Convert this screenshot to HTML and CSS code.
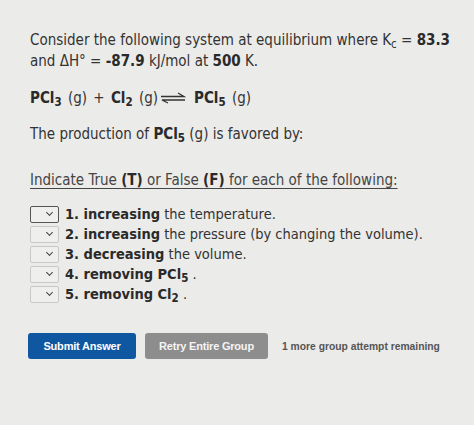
FILE: index.html
```html
<!DOCTYPE html>
<html>
<head>
<meta charset="utf-8">
<link rel="stylesheet" href="styles.css">
</head>
<body>
<div class="page">
  <p class="intro">Consider the following system at equilibrium where K<sub>c</sub> = <b>83.3</b> and ΔH° = <b>-87.9</b> kJ/mol at <b>500</b> K.</p>
  <p class="eq"><b>PCl<sub>3</sub></b> (g) + <b>Cl<sub>2</sub></b> (g)<span class="arrow"><svg width="26" height="12" viewBox="0 0 26 12"><path d="M1 4.5 H24 L18 1" fill="none" stroke="#333" stroke-width="1.3"/><path d="M25 8 H2 L8 11" fill="none" stroke="#333" stroke-width="1.3"/></svg></span><b>PCl<sub>5</sub></b> (g)</p>
  <p class="q">The production of <b>PCl<sub>5</sub></b> (g) is favored by:</p>
  <p class="ind"><u>Indicate True <b>(T)</b> or False <b>(F)</b> for each of the following:</u></p>
  <ul class="items">
    <li><span class="sel focus"><span class="chev"></span></span><span><b>1. increasing</b> the temperature.</span></li>
    <li><span class="sel"><span class="chev"></span></span><span><b>2. increasing</b> the pressure (by changing the volume).</span></li>
    <li><span class="sel"><span class="chev"></span></span><span><b>3. decreasing</b> the volume.</span></li>
    <li><span class="sel"><span class="chev"></span></span><span><b>4. removing PCl<sub>5</sub></b> .</span></li>
    <li><span class="sel"><span class="chev"></span></span><span><b>5. removing Cl<sub>2</sub></b> .</span></li>
  </ul>
  <div class="actions">
    <button class="btn submit">Submit Answer</button>
    <button class="btn retry">Retry Entire Group</button>
    <span class="remain">1 more group attempt remaining</span>
  </div>
</div>
</body>
</html>
```
FILE: styles.css
```css
html, body { margin: 0; padding: 0; }
body {
  background: #ebebe9;
  width: 474px;
  height: 425px;
  overflow: hidden;
  font-family: "DejaVu Sans Condensed", "DejaVu Sans", Verdana, sans-serif;
  font-stretch: condensed;
  color: #333;
}
.page { padding: 30px 0 0 30px; }
p { margin: 0; font-size: 15px; line-height: 21px; }
.intro { width: 430px; }
sub { font-size: 11.5px; vertical-align: -3px; line-height: 0; }
b { font-weight: bold; color: #2a2a2a; }
.eq { margin-top: 16px; word-spacing: 2px; }
.arrow { display: inline-block; vertical-align: middle; margin: 0 8px 0 2px; position: relative; top: -1px; }
.arrow svg { display: block; }
.q { margin-top: 15px; }
.ind { margin-top: 25px; color: #444; }
.ind u { text-decoration-thickness: 1px; text-underline-offset: 3px; }
.items { list-style: none; margin: 13px 0 0 0; padding: 0; }
.items li { display: flex; align-items: center; gap: 6px; height: 20px; font-size: 14.5px; }
.sel {
  box-sizing: border-box;
  width: 29px; height: 17px;
  border: 1px solid #c8c8c6;
  border-radius: 2px;
  background: #efefed;
  position: relative;
}
.sel.focus { border: 1.5px solid #555; }
.chev {
  position: absolute; right: 6px; top: 3px;
  width: 4px; height: 4px;
  border-right: 1.3px solid #444;
  border-bottom: 1.3px solid #444;
  transform: rotate(45deg);
}
.actions { display: flex; align-items: center; margin-top: 29px; }
.btn {
  border: none; border-radius: 3px;
  font-family: "Liberation Sans", Arial, sans-serif;
  font-weight: bold; font-size: 11px; letter-spacing: -0.2px; color: #fff;
  height: 26px; padding: 0;
}
.submit { background: #0f57a0; width: 108px; margin-left: -2px; }
.retry { background: #8d8d8d; width: 123px; margin-left: 9px; color: #f4f4f4; }
.remain {
  margin-left: 14px;
  font-family: "Liberation Sans", Arial, sans-serif;
  font-weight: bold; font-size: 10.3px; color: #555;
}
```
